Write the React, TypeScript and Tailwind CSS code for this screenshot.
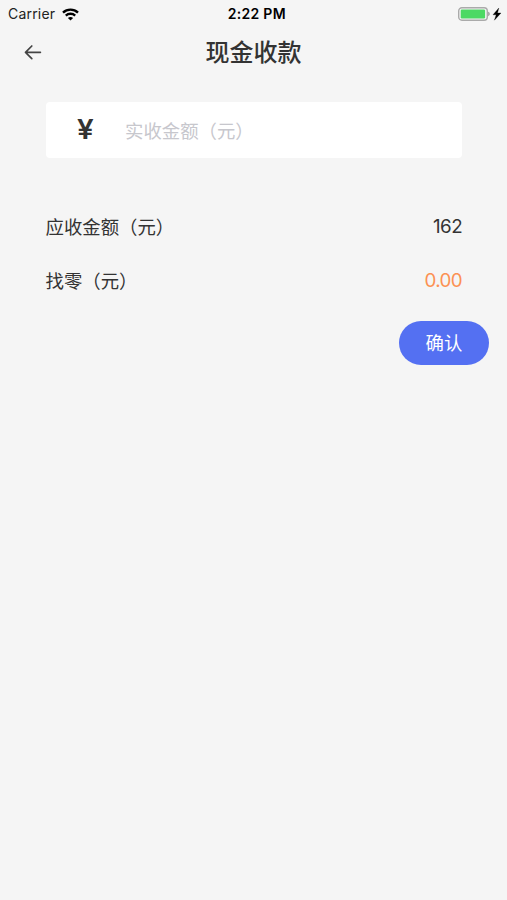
import { useState } from "react";

function WifiIcon() {
  return (
    <svg width="17" height="13" viewBox="0 0 17 13" fill="none" stroke="#000" strokeWidth="2.4">
      <path d="M1 4.6C5.2 0.6 11.8 0.6 16 4.6" />
      <path d="M3.8 7.6C6.4 5.2 10.6 5.2 13.2 7.6" />
      <path d="M8.5 12.6L5.9 10C7.4 8.7 9.6 8.7 11.1 10Z" fill="#000" stroke="none" />
    </svg>
  );
}

function BatteryIcon() {
  return (
    <svg width="44" height="14" viewBox="0 0 44 14">
      <rect x="0.7" y="0.7" width="28.6" height="12.6" rx="3.2" fill="none" stroke="#aaa" strokeWidth="1.4" />
      <rect x="2.7" y="2.6" width="24.4" height="8.8" rx="1.2" fill="#4cd964" />
      <path d="M30.2 4.8C32.2 5.4 32.2 8.6 30.2 9.2Z" fill="#999" />
      <path d="M40.8 1L35 7.8H38.2L36.4 13.2L43 6H39.5Z" fill="#000" stroke="#000" strokeWidth="0.3" />
    </svg>
  );
}

function StatusBar() {
  return (
    <div className="grid h-7 grid-cols-[1fr_auto_1fr] items-center pl-2 pr-[5px] font-['Inter',sans-serif] text-sm text-black">
      <div className="flex items-center gap-[7px]">
        <span className="tracking-[0.2px] text-[#222]">Carrier</span>
        <WifiIcon />
      </div>
      <span className="pl-[3.5px] font-semibold tracking-[0.3px]">2:22 PM</span>
      <div className="flex justify-end">
        <BatteryIcon />
      </div>
    </div>
  );
}

function BackIcon() {
  return (
    <svg width="18" height="16" viewBox="0 0 18 16" fill="none" stroke="#444" strokeWidth="1.7" strokeLinecap="round" strokeLinejoin="round">
      <path d="M16.4 8.3H1.5M7.8 2L1.5 8.3L7.8 14.6" />
    </svg>
  );
}

export default function App() {
  const [amount, setAmount] = useState("");

  return (
    <div className="min-h-screen bg-[#f5f5f5] font-['Noto_Sans_CJK_SC',sans-serif] text-[#333]">
      <StatusBar />

      {/* Header */}
      <header className="grid h-12 grid-cols-[66px_1fr_66px] items-center">
        <button className="flex justify-center" aria-label="返回">
          <BackIcon />
        </button>
        <h1 className="pb-0.5 text-center text-2xl font-medium">现金收款</h1>
      </header>

      <main className="pt-[26px]">
        <label className="ml-[45.5px] mr-[45px] flex h-14 items-center rounded bg-white pl-[31.5px]">
          <span className="w-12 origin-left scale-x-110 font-['Inter',sans-serif] text-[27px] font-semibold">
            ¥
          </span>
          <input
            value={amount}
            onChange={(e) => setAmount(e.target.value)}
            placeholder="实收金额（元）"
            className="min-w-0 flex-1 pt-0.5 text-[18.4px] outline-none placeholder:text-[#c7c7cd]"
          />
        </label>

        <div className="ml-[45.5px] mr-[45px] mt-[42px] text-[18.4px]">
          <div className="flex h-[54px] items-center justify-between">
            <span>应收金额（元）</span>
            <span className="font-['Inter',sans-serif] text-[18.8px] tracking-[-0.6px]">162</span>
          </div>
          <div className="flex h-[54px] items-center justify-between">
            <span>找零（元）</span>
            <span className="font-['Inter',sans-serif] text-[18.8px] tracking-[-0.6px] text-[#fc9153]">
              0.00
            </span>
          </div>
        </div>

        <div className="mt-[13px] flex justify-end pr-[18px]">
          <button className="h-11 w-[90px] rounded-full bg-[#5470f2] pb-px text-[18.4px] text-white">
            确认
          </button>
        </div>
      </main>
    </div>
  );
}
